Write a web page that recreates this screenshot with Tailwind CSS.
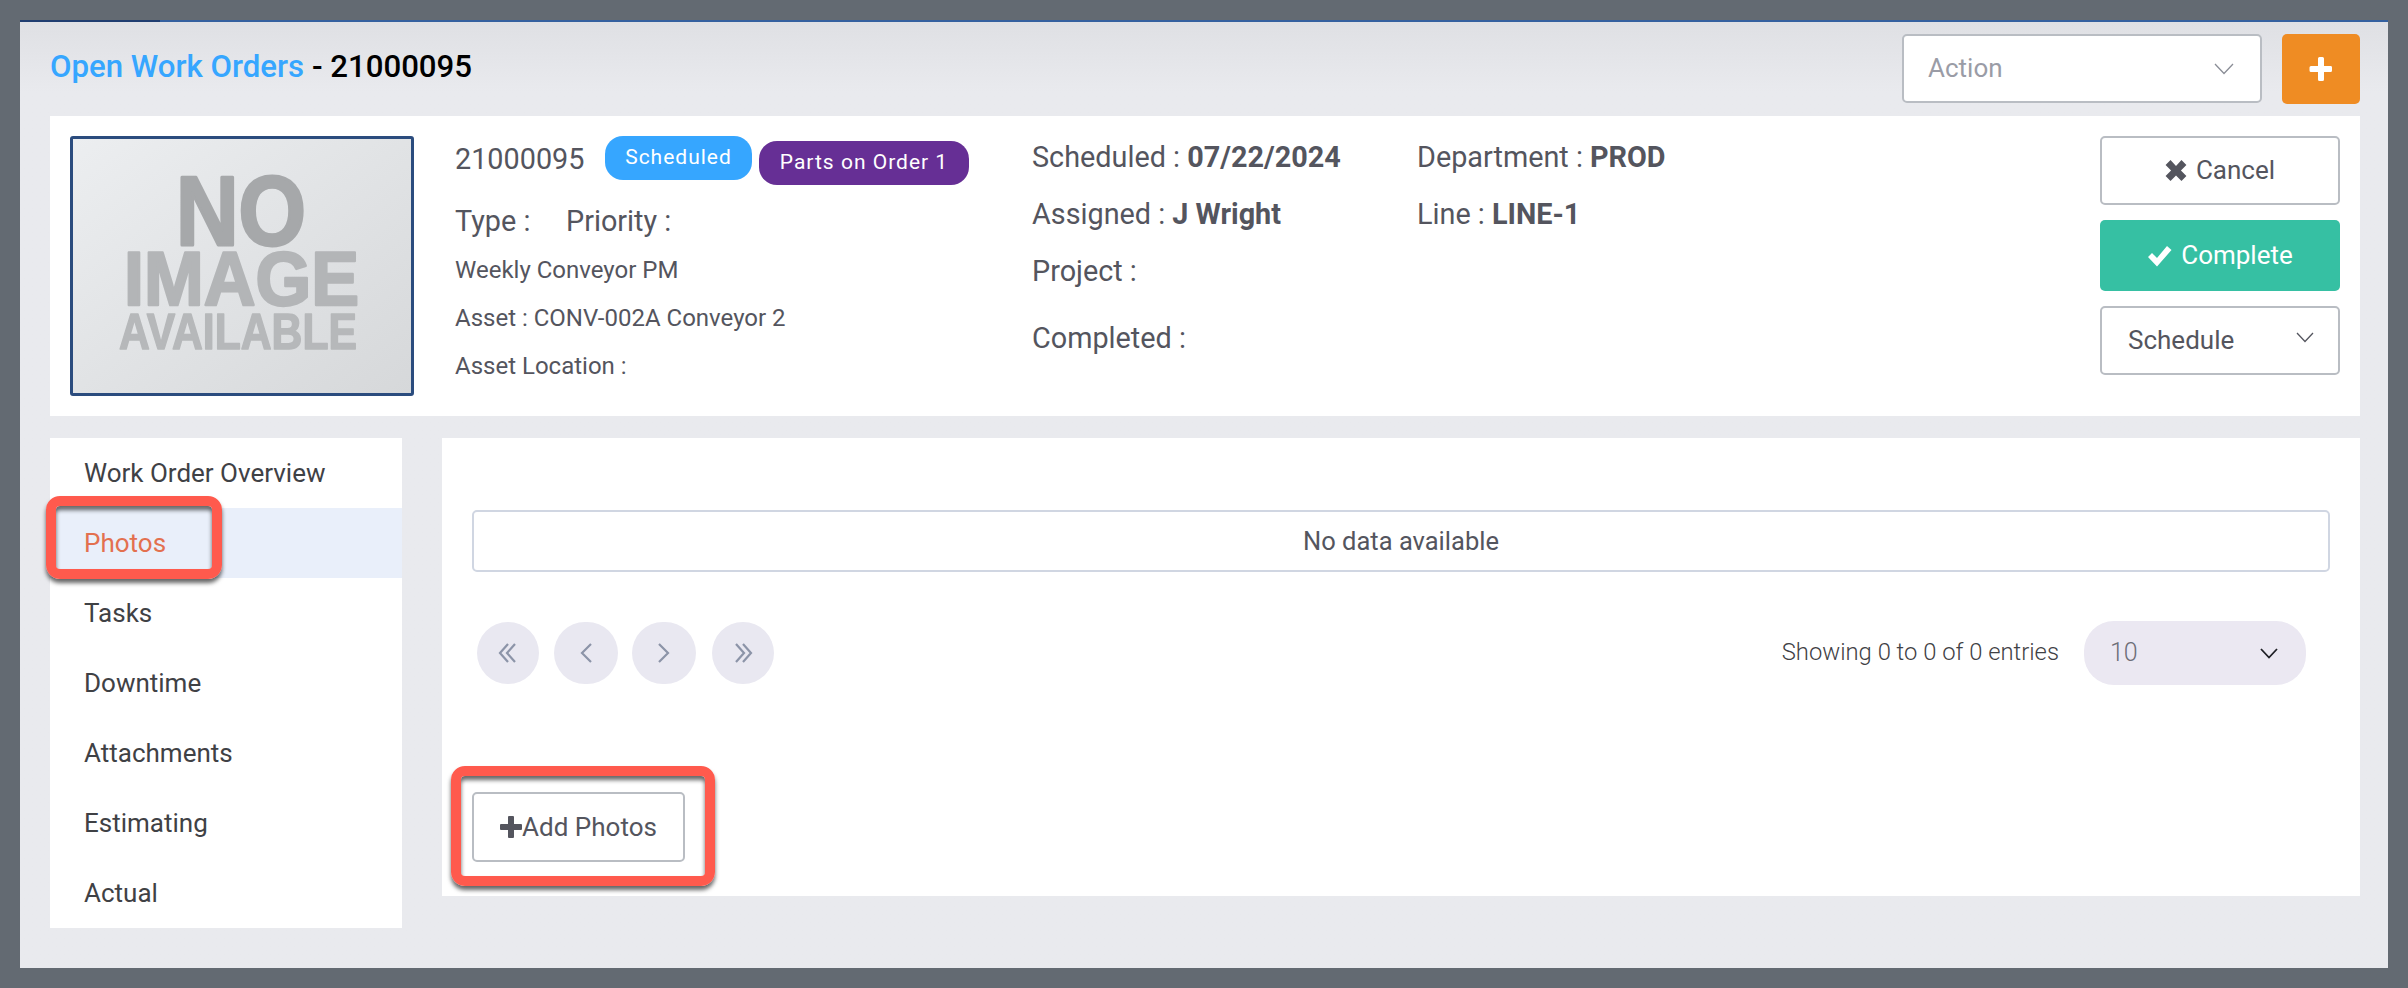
<!DOCTYPE html>
<html lang="en">
<head>
  <meta charset="UTF-8" />
  <title>Open Work Orders - 21000095</title>
  <script src="https://cdn.jsdelivr.net/npm/@tailwindcss/browser@4"></script>
</head>
<body class="bg-[#636a72] font-[Roboto,sans-serif] text-[#54555e] overflow-hidden">
  <div class="h-[988px] p-5">
    <div class="relative h-[948px] bg-[#e9eaee] bg-gradient-to-b from-[#dfe0e4] to-[#e9eaee] to-[70px] bg-no-repeat border-t-2 border-[#34609f]">
      <div class="absolute left-0 -top-[2px] w-[140px] h-[2px] bg-[#1f3d70]"></div>

      <!-- header -->
      <div class="flex items-start h-[94px] pl-[30px] pr-7 pt-3">
        <h1 class="pt-[15px] text-[31.2px] leading-9 font-medium text-black"><span class="text-[#36a6ff]">Open Work Orders</span> - 21000095</h1>
        <div class="ml-auto flex w-[360px] h-[69px] items-center justify-between bg-white border-2 border-[#b9bdc3] rounded-[5px] pl-6 pr-[26px] text-[26px] text-[#9a9ca6]">
          Action
          <svg class="w-[20px] h-[12px]" viewBox="0 0 20 12" fill="none" stroke="#8a8d96" stroke-width="1.3"><path d="M1 1l9 9.5L19 1"/></svg>
        </div>
        <button class="ml-[20px] w-[78px] h-[70px] flex items-center justify-center bg-[#ef8c23] rounded-[5px]">
          <svg class="w-[24px] h-[26px]" viewBox="0 0 24 26" fill="#fff"><path d="M9 2.500a1.500 1.500 0 0 1 1.500-1.500h3a1.500 1.500 0 0 1 1.500 1.500V10h7a1.500 1.500 0 0 1 1 1.500v3a1.500 1.500 0 0 1-1 1.500h-7v7.500a1.500 1.500 0 0 1-1.500 1.500h-3A1.500 1.500 0 0 1 9 23.500V16H2a1.500 1.500 0 0 1-1.500-1.500v-3A1.500 1.500 0 0 1 2 10h7z"/></svg>
        </button>
      </div>

      <!-- work order card -->
      <div class="flex h-[300px] ml-[30px] mr-[28px] bg-white pt-5 pl-5 pr-5">
        <div class="w-[344px] h-[260px] shrink-0 border-[3px] border-[#2b4c7e] rounded-[3px] bg-gradient-to-br from-[#eceef0] to-[#d6d8da]">
          <svg class="w-full h-full blur-[0.6px]" viewBox="0 0 338 254" font-family="Liberation Sans" font-weight="700" stroke-linejoin="round">
            <text x="103" y="106" font-size="98" textLength="130" lengthAdjust="spacingAndGlyphs" fill="#a6a8aa" stroke="#a6a8aa" stroke-width="3">NO</text>
            <text x="51" y="166" font-size="76" textLength="235" lengthAdjust="spacingAndGlyphs" fill="#b3b5b7" stroke="#b3b5b7" stroke-width="2.500">IMAGE</text>
            <text x="46" y="210" font-size="50" textLength="238" lengthAdjust="spacingAndGlyphs" fill="#b6b8ba" stroke="#b6b8ba" stroke-width="1.500">AVAILABLE</text>
          </svg>
        </div>

        <div class="w-[618px] shrink-0 pl-[41px]">
          <div class="flex items-start h-[49px]">
            <span class="w-[150px] pt-[5px] text-[28.8px] leading-9">21000095</span>
            <span class="h-[44px] w-[147px] flex items-center justify-center rounded-[18px] bg-[#36a6ff] text-white text-[21px] tracking-[1px]">Scheduled</span>
            <span class="mt-[5px] ml-[7px] h-[44px] w-[210px] flex items-center justify-center rounded-[18px] bg-[#662f95] text-white text-[21px] tracking-[1px]">Parts on Order 1</span>
          </div>
          <div class="flex pt-[18px] text-[28.8px] leading-9">
            <span class="w-[111px]">Type :</span><span>Priority :</span>
          </div>
          <div class="pt-[7px] text-[24px] leading-[48px]">
            <p>Weekly Conveyor PM</p>
            <p>Asset : CONV-002A Conveyor 2</p>
            <p>Asset Location :</p>
          </div>
        </div>

        <div class="w-[385px] shrink-0 text-[28.8px] leading-9">
          <p class="pt-[3px]">Scheduled : <b class="font-bold">07/22/2024</b></p>
          <p class="pt-[21px]">Assigned : <b class="font-bold">J Wright</b></p>
          <p class="pt-[21px]">Project :</p>
          <p class="pt-[31px]">Completed :</p>
        </div>

        <div class="text-[28.8px] leading-9">
          <p class="pt-[3px]">Department : <b class="font-bold">PROD</b></p>
          <p class="pt-[21px]">Line : <b class="font-bold">LINE-1</b></p>
        </div>

        <div class="ml-auto w-[240px] flex flex-col gap-[15px] text-[26px]">
          <button class="h-[69px] flex items-center justify-center gap-[9px] border-2 border-[#b9bdc3] rounded-[5px] bg-white">
            <svg class="w-[22px] h-[23px]" viewBox="0 0 20 21" fill="#54555e"><path d="M5 1l5 5.500L15 1l4.500 4.500-5 5 5 5L15 20l-5-5-5 5-4.500-4.500 5-5-5-5z"/></svg>
            Cancel
          </button>
          <button class="h-[71px] flex items-center justify-center gap-[9px] rounded-[5px] bg-[#36c0a3] text-white">
            <svg class="w-[25px] h-[22px]" viewBox="0 0 25 22" fill="#fff"><path d="M1 12l4-4 5 5L20 1l4.500 4L10 21.500z"/></svg>
            Complete
          </button>
          <button class="h-[69px] flex items-center justify-between border-2 border-[#b9bdc3] rounded-[5px] bg-white pl-[26px] pr-[24px]">
            Schedule
            <svg class="w-[18px] h-[11px] -mt-[6px]" viewBox="0 0 18 11" fill="none" stroke="#54555e" stroke-width="1.300"><path d="M1 1l8 8.500L17 1"/></svg>
          </button>
        </div>
      </div>

      <!-- lower section -->
      <div class="flex items-start gap-10 ml-[30px] mr-[28px] mt-[22px]">
        <nav class="w-[352px] h-[490px] bg-white text-[26px] text-[#3f4145]">
          <a class="flex items-center h-[70px] pl-[34px] pt-[1px]">Work Order Overview</a>
          <a class="flex items-center h-[70px] pl-[34px] pt-[1px] bg-[#e9effa] text-[#e3704f]">Photos</a>
          <a class="flex items-center h-[70px] pl-[34px] pt-[1px]">Tasks</a>
          <a class="flex items-center h-[70px] pl-[34px] pt-[1px]">Downtime</a>
          <a class="flex items-center h-[70px] pl-[34px] pt-[1px]">Attachments</a>
          <a class="flex items-center h-[70px] pl-[34px] pt-[1px]">Estimating</a>
          <a class="flex items-center h-[70px] pl-[34px] pt-[1px]">Actual</a>
        </nav>

        <section class="flex-1 h-[458px] bg-white px-[30px] pt-[72px]">
          <div class="h-[62px] flex items-center justify-center border-2 border-[#d0d6e2] rounded-[5px] text-[25.5px]">No data available</div>
          <div class="flex items-center mt-[49px] pl-[5px] pr-[24px]">
            <span class="w-[62px] h-[62px] flex items-center justify-center rounded-full bg-[#e9e8f1]">
              <svg class="w-[20px] h-[22px]" viewBox="0 0 20 22" fill="none" stroke="#8c94a8" stroke-width="2.200"><path d="M10 2l-8 9 8 9M17 2l-8 9 8 9"/></svg>
            </span>
            <span class="ml-[15px] w-[64px] h-[62px] flex items-center justify-center rounded-full bg-[#e9e8f1]">
              <svg class="w-[14px] h-[22px]" viewBox="0 0 14 22" fill="none" stroke="#8c94a8" stroke-width="2.200"><path d="M12 2l-9 9 9 9"/></svg>
            </span>
            <span class="ml-[14px] w-[64px] h-[62px] flex items-center justify-center rounded-full bg-[#e9e8f1]">
              <svg class="w-[14px] h-[22px]" viewBox="0 0 14 22" fill="none" stroke="#8c94a8" stroke-width="2.200"><path d="M2 2l9 9-9 9"/></svg>
            </span>
            <span class="ml-[16px] w-[62px] h-[62px] flex items-center justify-center rounded-full bg-[#e9e8f1]">
              <svg class="w-[20px] h-[22px]" viewBox="0 0 20 22" fill="none" stroke="#8c94a8" stroke-width="2.200"><path d="M3 2l8 9-8 9M10 2l8 9-8 9"/></svg>
            </span>
            <span class="ml-auto text-[23.8px] font-light text-[#3f4145]">Showing 0 to 0 of 0 entries</span>
            <div class="ml-[25px] w-[222px] h-[64px] flex items-center justify-between rounded-[30px] bg-[#ebe8f2] pl-[26px] pr-[28px] text-[25px] font-light text-[#6d6e78]">
              10
              <svg class="w-[18px] h-[11px]" viewBox="0 0 18 11" fill="none" stroke="#1f2026" stroke-width="1.800"><path d="M1 1l8 8.500L17 1"/></svg>
            </div>
          </div>
          <button class="flex items-center justify-center w-[213px] h-[70px] mt-[107px] border-2 border-[#b9bdc3] rounded-[5px] bg-white text-[26px]">
            <svg class="w-[22px] h-[24px]" viewBox="0 0 22 24" fill="#54555e"><path d="M8 2a1 1 0 0 1 1-1h4a1 1 0 0 1 1 1v7h7a1 1 0 0 1 1 1v4a1 1 0 0 1-1 1h-7v7a1 1 0 0 1-1 1H9a1 1 0 0 1-1-1v-7H1a1 1 0 0 1-1-1v-4a1 1 0 0 1 1-1h7z"/></svg>
            Add Photos
          </button>
        </section>
      </div>

      <!-- callouts drawn over the screenshot -->
      <div class="absolute left-[26px] top-[474px] w-[176px] h-[83px] border-[10px] border-[#ff5a4d] rounded-[14px] shadow-[0_4px_4px_rgba(0,0,0,0.6),inset_0_4px_4px_rgba(0,0,0,0.6)]"></div>
      <div class="absolute left-[431px] top-[744px] w-[264px] h-[120px] border-[10px] border-[#ff5a4d] rounded-[14px] shadow-[0_4px_4px_rgba(0,0,0,0.6),inset_0_4px_4px_rgba(0,0,0,0.6)]"></div>
    </div>
  </div>
</body>
</html>
